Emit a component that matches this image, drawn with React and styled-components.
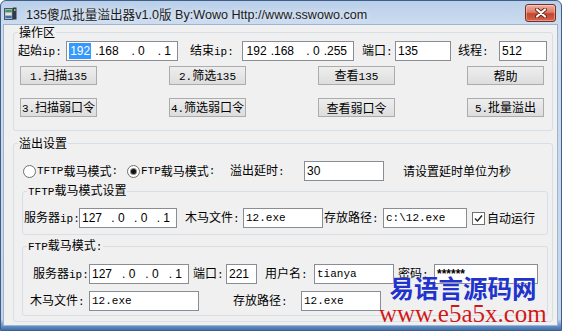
import React from 'react'
import styled, { createGlobalStyle } from 'styled-components'

const GlobalStyle = createGlobalStyle`
  html, body { margin: 0; padding: 0; background: #ffffff; }
  #root { width: 562px; height: 331px; }
`

const SANS = `"Liberation Sans", "Noto Sans CJK SC", sans-serif`
const MONO = `"Liberation Mono", monospace`

const Window = styled.div`
  position: relative;
  box-sizing: border-box;
  width: 562px;
  height: 331px;
  display: flex;
  flex-direction: column;
  padding: 0 4px 5px 3px;
  border: 1px solid #3f5f88;
  border-radius: 6px 6px 0 0;
  background: linear-gradient(180deg, #b9cfe9 0px, #cddcf0 24px, #c3d6ed 318px, #6f98cc 324px, #2d5e9e 331px);
  font-family: "Noto Sans CJK SC", sans-serif;
  font-size: 12px;
  color: #000;
`

const TitleBar = styled.div`
  flex: none;
  height: 24px;
  display: flex;
  align-items: center;
`

const Title = styled.span`
  margin-left: 9px;
  font-family: ${SANS};
  font-size: 12.6px;
  color: #1b1b1b;
  text-shadow: 0 0 6px rgba(255, 255, 255, 0.8);
  white-space: nowrap;
`

const CloseBtn = styled.div`
  margin-left: auto;
  margin-right: 1px;
  align-self: flex-start;
  margin-top: 3px;
  box-sizing: border-box;
  width: 31px;
  height: 18px;
  border: 1px solid #7a2e22;
  border-radius: 3px;
  background: linear-gradient(180deg, #eab1a3 0%, #dc7c66 45%, #c5442d 55%, #d4644b 100%);
  box-shadow: inset 0 0 0 1px rgba(255, 255, 255, 0.35);
  display: flex;
  align-items: center;
  justify-content: center;
`

const Client = styled.div`
  flex: 1;
  background: #f0f0f0;
  box-shadow: 0 0 0 1px #9fb4cf;
  padding: 0 4px 0 9px;
  display: flex;
  flex-direction: column;
`

const Group = styled.fieldset`
  margin: ${p => p.$mt || 0}px 0 0;
  padding: ${p => p.$pad};
  border: 1px solid #d5dfe5;
  border-radius: 3px;
  min-width: 0;
`

const Legend = styled.legend`
  padding: 0 1px;
  margin-left: ${p => p.$ml || 0}px;
  line-height: 14px;
  white-space: nowrap;
`

const Row = styled.div`
  display: flex;
  align-items: center;
  height: 20px;
  margin-top: ${p => p.$mt || 0}px;
`

const Label = styled.span`
  flex: none;
  width: ${p => (p.$w ? `${p.$w}px` : 'auto')};
  margin-left: ${p => p.$ml || 0}px;
  line-height: 14px;
  white-space: nowrap;
`

const Lat = styled.span`
  font-family: ${MONO};
  font-size: 11px;
`

const Field = styled.div`
  flex: none;
  box-sizing: border-box;
  width: ${p => p.$w}px;
  height: 20px;
  margin-left: ${p => p.$ml || 0}px;
  padding: 0 2px;
  border: 1px solid #8a8d93;
  background: #fff;
  display: flex;
  align-items: center;
  font-family: ${p => (p.$mono ? MONO : SANS)};
  font-size: ${p => (p.$mono ? 11 : 12)}px;
  font-weight: ${p => (p.$bold ? 700 : 400)};
  white-space: pre;
  overflow: hidden;
`

const IpSeg = styled.span`
  flex: 1;
  text-align: right;
  padding-right: 4px;
  white-space: pre;
`

const Sel = styled.span`
  background: #3399ff;
  color: #fff;
  padding: 1px 1px;
`

const BtnRow = styled.div`
  display: flex;
  gap: 72px;
  padding-left: 2px;
  margin-top: ${p => p.$mt}px;
`

const Btn = styled.button`
  width: 77px;
  height: 19px;
  margin: 0;
  padding: 0;
  border: 1px solid #acacac;
  background: linear-gradient(180deg, #eeeeee, #dddddd);
  font: inherit;
  line-height: 14px;
  color: #000;
`

const Choice = styled.span`
  flex: none;
  display: flex;
  align-items: center;
  width: ${p => p.$w}px;
  margin-left: ${p => p.$ml || 0}px;
  line-height: 14px;
  white-space: nowrap;
`

const Radio = styled.span`
  flex: none;
  box-sizing: border-box;
  width: 13px;
  height: 13px;
  margin-right: 1px;
  border-radius: 50%;
  border: 1px solid #707070;
  background: #fff;
  display: flex;
  align-items: center;
  justify-content: center;
  &::after {
    content: '';
    width: 5px;
    height: 5px;
    border-radius: 50%;
    background: ${p => (p.$on ? '#111' : 'transparent')};
    box-shadow: ${p => (p.$on ? '0 0 0 1px #8a8a8a' : 'none')};
  }
`

const Check = styled.span`
  flex: none;
  box-sizing: border-box;
  width: 13px;
  height: 13px;
  margin-left: 5px;
  border: 1px solid #707070;
  background: #fff;
  display: flex;
  align-items: center;
  justify-content: center;
`

const Watermark = styled.div`
  position: absolute;
  left: 378px;
  top: 273px;
  display: flex;
  flex-direction: column;
  align-items: center;
  pointer-events: none;
`

const WmCn = styled.div`
  font-family: "Noto Sans CJK SC", sans-serif;
  font-weight: 700;
  font-size: 24.5px;
  line-height: 27px;
  color: #2233cc;
  text-shadow: 0 0 1px #fff;
  white-space: nowrap;
`

const WmEn = styled.div`
  font-family: "Liberation Serif", serif;
  font-size: 25px;
  line-height: 26px;
  color: #d01818;
  text-shadow: 0 0 1px #fff;
  white-space: nowrap;
`

// split ascii runs out so they get the narrow half-width look
function mix(text) {
  return text
    .split(/([\x20-\x7e]+)/)
    .filter(Boolean)
    .map((part, i) => (/^[\x20-\x7e]+$/.test(part) ? <Lat key={i}>{part}</Lat> : part))
}

function Ip({ w, parts, sel }) {
  return (
    <Field $w={w}>
      {parts.map((p, i) => (
        <IpSeg key={i}>{i === 0 && sel ? <Sel>{p}</Sel> : p}</IpSeg>
      ))}
    </Field>
  )
}

function AppIcon() {
  return (
    <svg width="13" height="13" viewBox="0 0 13 13">
      <rect x="0.5" y="1.5" width="8" height="11" fill="#a7b3bf" stroke="#4b5664" />
      <rect x="1.5" y="3" width="6" height="2" fill="#3f9c4c" />
      <rect x="1.5" y="6" width="6" height="2" fill="#e1e5ea" />
      <rect x="1.5" y="9" width="6" height="2" fill="#3b6fb6" />
      <rect x="9" y="0.5" width="3.5" height="12" fill="#2f3b48" />
      <rect x="10" y="2" width="1.5" height="2" fill="#7bd36b" />
    </svg>
  )
}

function CloseIcon() {
  return (
    <svg width="12" height="10" viewBox="0 0 12 10">
      <path d="M2 1.5 L10 8.5 M10 1.5 L2 8.5" stroke="#6b2418" strokeWidth="4" strokeLinecap="round" />
      <path d="M2 1.5 L10 8.5 M10 1.5 L2 8.5" stroke="#ffffff" strokeWidth="2.2" strokeLinecap="round" />
    </svg>
  )
}

const buttons = [
  ['1.扫描135', '2.筛选135', '查看135', '帮助'],
  ['3.扫描弱口令', '4.筛选弱口令', '查看弱口令', '5.批量溢出'],
]

export default function App() {
  return (
    <>
      <GlobalStyle />
      <Window>
        <TitleBar>
          <AppIcon />
          <Title>135傻瓜批量溢出器v1.0版 By:Wowo Http://www.sswowo.com</Title>
          <CloseBtn>
            <CloseIcon />
          </CloseBtn>
        </TitleBar>

        <Client>
          <Group $pad="2px 4px 13px 4px">
            <Legend>操作区</Legend>
            <Row>
              <Label $w={48}>{mix('起始ip:')}</Label>
              <Ip w={112} parts={['192', '.168', '. 0', '. 1']} sel />
              <Label $ml={12} $w={52}>{mix('结束ip:')}</Label>
              <Ip w={112} parts={['192', '.168', '. 0', '.255']} />
              <Label $ml={8} $w={33}>{mix('端口:')}</Label>
              <Field $w={56}>135</Field>
              <Label $ml={7} $w={41}>{mix('线程:')}</Label>
              <Field $w={48}>512</Field>
            </Row>
            {buttons.map((row, i) => (
              <BtnRow key={i} $mt={i === 0 ? 5 : 13}>
                {row.map(t => (
                  <Btn key={t}>{mix(t)}</Btn>
                ))}
              </BtnRow>
            ))}
          </Group>

          <Group $mt={5} $pad="11px 4px 5px 8px">
            <Legend $ml={-4}>溢出设置</Legend>
            <Row>
              <Choice $w={104} $ml={1}>
                <Radio />
                {mix('TFTP载马模式:')}
              </Choice>
              <Choice $w={103}>
                <Radio $on />
                {mix('FTP载马模式:')}
              </Choice>
              <Label $w={74}>{mix('溢出延时:')}</Label>
              <Field $w={80}>30</Field>
              <Label $ml={19}>请设置延时单位为秒</Label>
            </Row>

            <Group $mt={2} $pad="9px 2px 6px 1px">
              <Legend $ml={3}>{mix('TFTP载马模式设置')}</Legend>
              <Row>
                <Label $w={55}>{mix('服务器ip:')}</Label>
                <Ip w={98} parts={['127', '. 0', '. 0', '. 1']} />
                <Label $ml={8} $w={58}>{mix('木马文件:')}</Label>
                <Field $w={80} $mono>12.exe</Field>
                <Label $ml={1} $w={59}>{mix('存放路径:')}</Label>
                <Field $w={84} $mono>c:\12.exe</Field>
                <Check>
                  <svg width="9" height="9" viewBox="0 0 9 9">
                    <path d="M1 4.5 L3.5 7 L8 1.5" fill="none" stroke="#222" strokeWidth="1.4" />
                  </svg>
                </Check>
                <Label $ml={2}>自动运行</Label>
              </Row>
            </Group>

            <Group $mt={3} $pad="10px 2px 4px 1px">
              <Legend $ml={3}>{mix('FTP载马模式:')}</Legend>
              <Row>
                <Label $ml={9} $w={56}>{mix('服务器ip:')}</Label>
                <Ip w={100} parts={['127', '. 0', '. 0', '. 1']} />
                <Label $ml={4} $w={33}>{mix('端口:')}</Label>
                <Field $w={31}>221</Field>
                <Label $ml={8} $w={49}>{mix('用户名:')}</Label>
                <Field $w={80} $mono>tianya</Field>
                <Label $ml={4} $w={36}>{mix('密码:')}</Label>
                <Field $w={104} $bold>******</Field>
              </Row>
              <Row $mt={7}>
                <Label $ml={6} $w={59}>{mix('木马文件:')}</Label>
                <Field $w={110} $mono>12.exe</Field>
                <Label $ml={34} $w={68}>{mix('存放路径:')}</Label>
                <Field $w={80} $mono>12.exe</Field>
              </Row>
            </Group>
          </Group>
        </Client>

        <Watermark>
          <WmCn>易语言源码网</WmCn>
          <WmEn>www.e5a5x.com</WmEn>
        </Watermark>
      </Window>
    </>
  )
}
